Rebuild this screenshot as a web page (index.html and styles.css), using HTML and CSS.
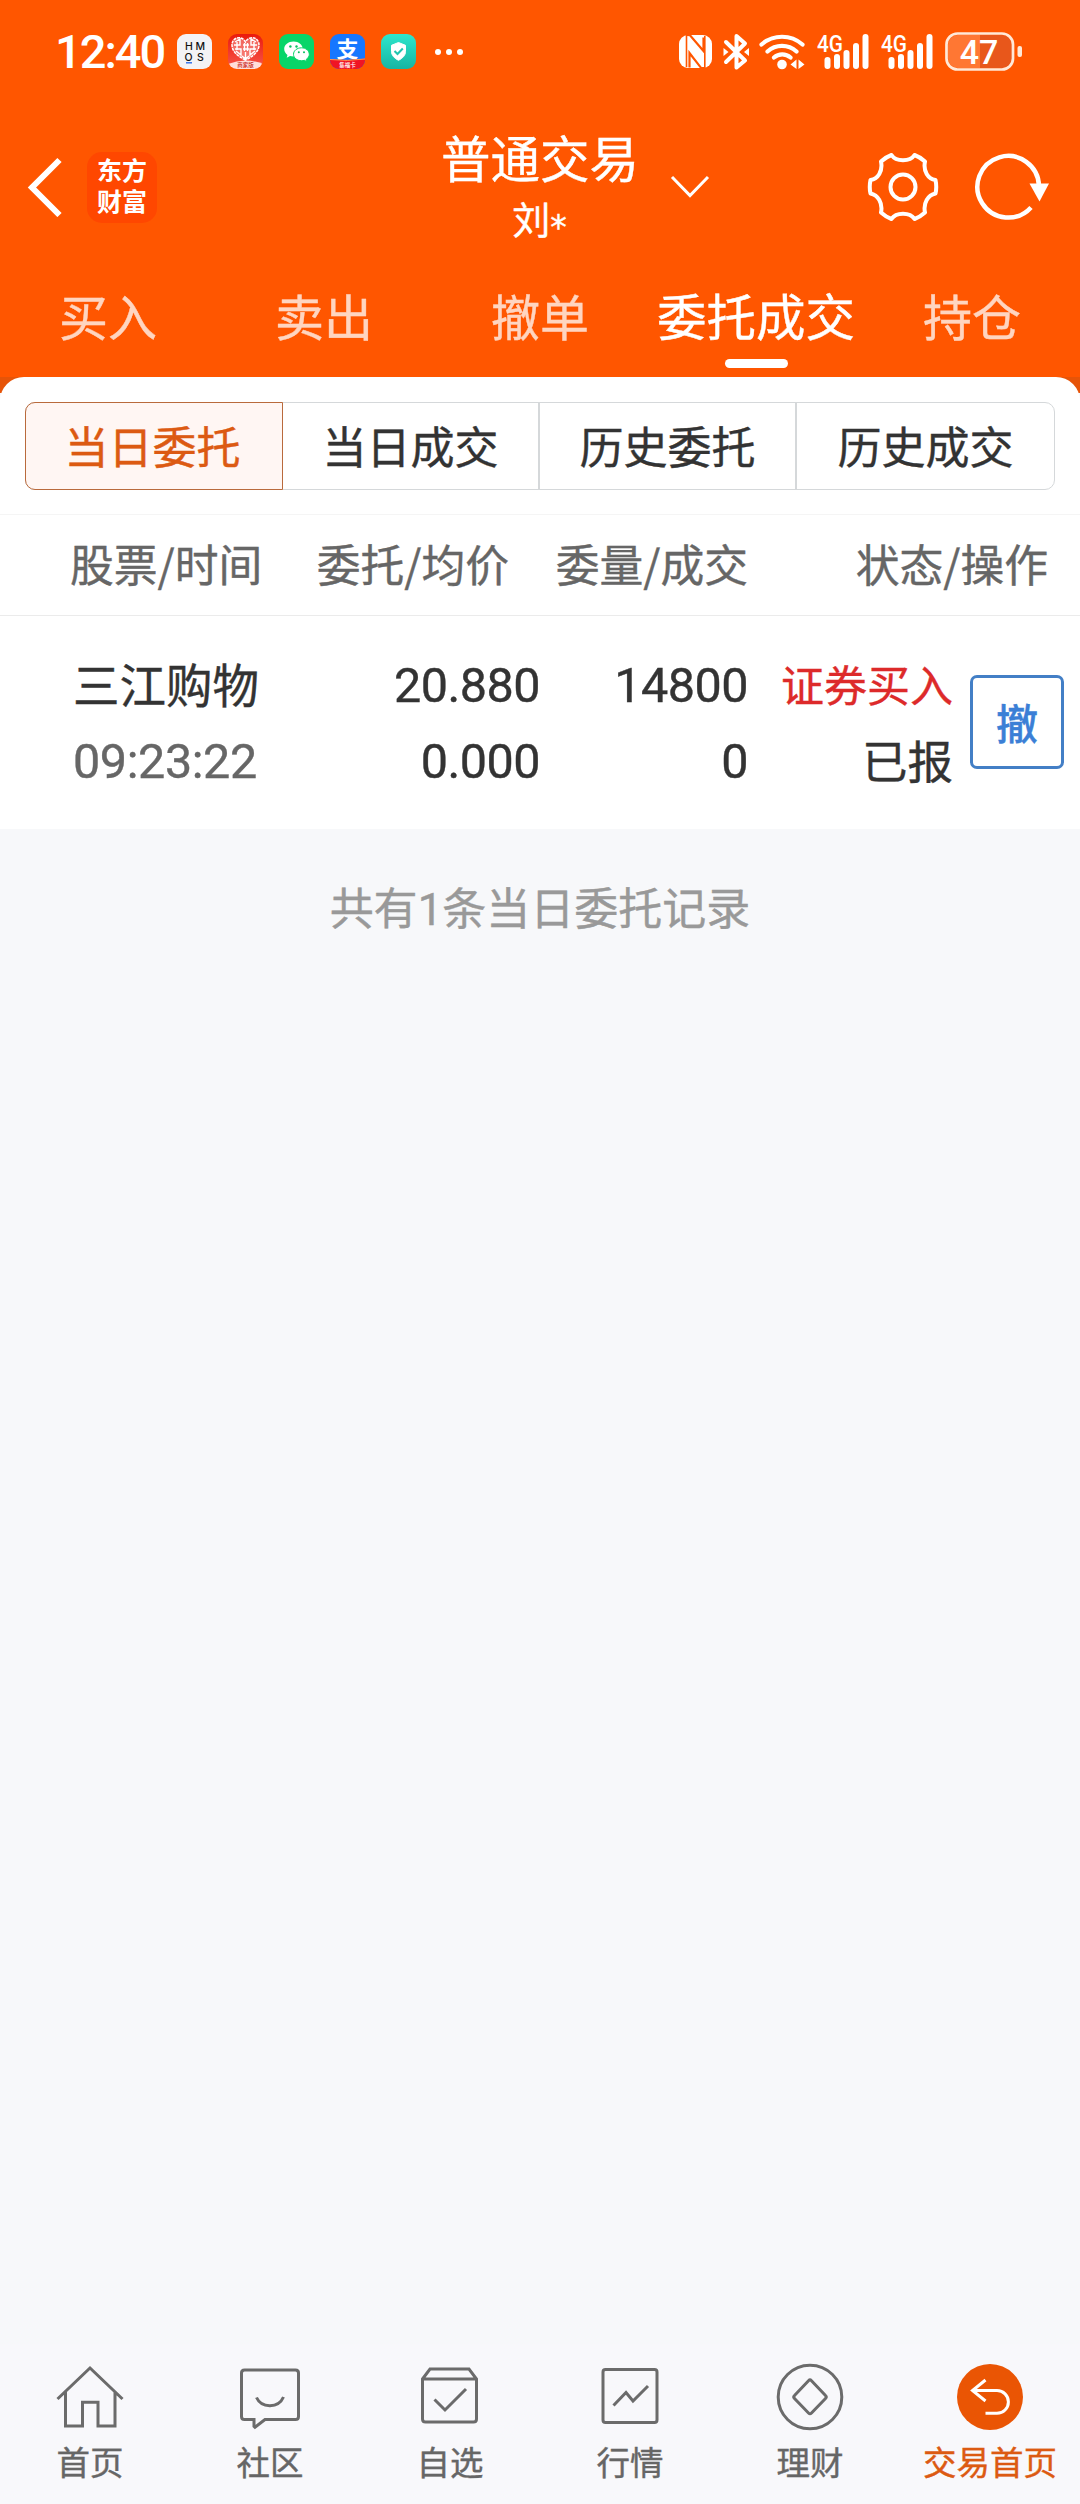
FILE: index.html
```
<!DOCTYPE html>
<html lang="zh-CN">
<head>
<meta charset="utf-8">
<title>普通交易</title>
<link rel="stylesheet" href="styles.css">
</head>
<body>
<header class="top">
  <div class="status">
    <span class="clock">12:40</span>
    <div class="apps">
      <svg width="35" height="35" viewBox="0 0 35 35"><rect width="35" height="35" rx="9" fill="#f3f3f5"/><g class="hmos"><text x="8" y="15.5">H</text><text x="18.5" y="15.5">M</text><text x="7.5" y="27">O</text><text x="20" y="27">S</text></g><path d="M9 28.8h6" stroke="#2a6be8" stroke-width="1.4"/></svg>
      <svg width="35" height="35" viewBox="0 0 35 35"><defs><linearGradient id="red" x2="0" y2="1"><stop offset="0" stop-color="#ea1a0c"/><stop offset="1" stop-color="#f8574c"/></linearGradient><clipPath id="app"><rect width="35" height="35" rx="9"/></clipPath></defs><g clip-path="url(#app)"><rect width="35" height="35" fill="url(#red)"/><path d="M17.500 26C9 22 4 17 4 11c0-8 10-10 13.500-3C21 1 31 3 31 11c0 6-5 11-13.500 15z" fill="#fff" fill-opacity=".3" stroke="#fff" stroke-width="1.500" stroke-dasharray="3 .8"/><path d="M7 8l5-3v6H6m1 4h6v6l-5-4M28 8l-5-3v6h6m-1 4h-6v6l5-4M9 8v8m17-8v8M15 11h6m-6 4h6m-4.500-6v8m3-8v8M17.500 18v9M14 22l3.500 3 3.500-3" fill="none" stroke="#fff" stroke-width="1.400"/><path d="M0 30q17-7 35 0v5H0z" fill="#ffdfdb"/><text x="17.500" y="33.300" class="tiny redtext">商家版</text></g></svg>
      <svg width="35" height="35" viewBox="0 0 35 35"><rect width="35" height="35" rx="9" fill="#07d568"/><path d="M14.500 7.500c-5.200 0-9.300 3.300-9.300 7.600 0 2.400 1.300 4.500 3.300 5.800l-.8 2.900 3.300-1.700c1.100.3 2.300.5 3.500.5 5.200 0 9.300-3.300 9.300-7.500s-4.100-7.600-9.300-7.600z" fill="#fff"/><path d="M22.500 13.800c-4.500 0-8 2.900-8 6.500s3.500 6.400 8 6.400c1 0 1.900-.1 2.800-.4l2.700 1.400-.7-2.400c1.900-1.200 3-3 3-5 0-3.600-3.400-6.500-7.800-6.500z" fill="#fff" stroke="#07d568"/><g fill="#07c160"><circle cx="11.400" cy="12.500" r="1.200"/><circle cx="17.500" cy="12.500" r="1.200"/><circle cx="19.800" cy="18.300" r="1"/><circle cx="25" cy="18.300" r="1"/></g></svg>
      <svg width="35" height="35" viewBox="0 0 35 35"><g clip-path="url(#app)"><rect width="35" height="35" fill="#1677ff"/><text x="17.500" y="22.500" class="zhi">支</text><path d="M0 25q17.500 2 35-.5V35H0z" fill="#f01424"/><path d="M0 25.500q17.500 2 35-.5" fill="none" stroke="#ff9b50"/><text x="17.500" y="33" class="tiny">集福卡</text></g></svg>
      <svg width="35" height="35" viewBox="0 0 35 35"><defs><linearGradient id="teal" x2="0" y2="1"><stop stop-color="#2ee6cc"/><stop offset="1" stop-color="#16b5a2"/></linearGradient></defs><rect width="35" height="35" rx="9" fill="url(#teal)"/><path d="M17.500 8.500l7 2.800v6c0 4.300-3 7-7 9-4-2-7-4.700-7-9v-6z" fill="#fff" stroke="#fff" stroke-linejoin="round"/><path d="M13.500 17l3 3 5.300-5.500" fill="none" stroke="#20c5b0" stroke-width="2"/></svg>
    </div>
    <svg class="more" width="30" height="8" viewBox="0 0 30 8" fill="#fff"><circle cx="4" cy="4" r="3"/><circle cx="15" cy="4" r="3"/><circle cx="26" cy="4" r="3"/></svg>
    <svg class="system" width="345" height="48" viewBox="678 28 345 48" fill="#fff">
      <rect x="679" y="35" width="33" height="33" rx="9"/>
      <path d="M687 35l3 .2L703.500 51V37.500M704 68l-3-.2L689.500 53v14.500" fill="none" stroke="#ff5600" stroke-width="2.200"/><path d="M686.500 35v32M704.800 36v32" stroke="#ff5600" stroke-width="1.600"/>
      <path d="M726 42l19 18.500-8.500 7V36l8.500 7.500L726 62" fill="none" stroke="#fff" stroke-width="4" stroke-linejoin="round" stroke-linecap="round"/><path d="M723.500 48l5 4-5 4zM749 48l-5 4 5 4z"/>
      <g fill="none" stroke="#fff" stroke-width="4.200" stroke-linecap="round"><path d="M761.500 44.500a31 31 0 0 1 41 0M767.500 51.500a21.500 21.500 0 0 1 29 0M774 57.500a12.500 12.500 0 0 1 16.500 0"/></g><circle cx="782" cy="64.500" r="4.800"/><path d="M790.500 64.500l6-5v9.500zM804.500 64.500l-6-5v9.500z"/>
      <text x="817" y="51.500" class="net" textLength="26" lengthAdjust="spacingAndGlyphs">4G</text>
      <g id="bars"><rect x="824.500" y="57" width="6" height="12" rx="3"/><rect x="834" y="54" width="6" height="15" rx="3"/><rect x="843.500" y="50" width="6" height="19" rx="3"/><rect x="853" y="43" width="6" height="26" rx="3"/><rect x="862.500" y="34" width="6" height="35" rx="3"/></g>
      <text x="881" y="51.500" class="net" textLength="26" lengthAdjust="spacingAndGlyphs">4G</text>
      <use href="#bars" x="64"/>
      <path d="M980 35h-22a10 10 0 0 0-10 10v13a10 10 0 0 0 10 10h22z" fill-opacity=".2"/><path d="M980 35h22a10 10 0 0 1 10 10v13a10 10 0 0 1-10 10h-22z" fill="#e8571b"/>
      <rect x="946.500" y="33.500" width="66.500" height="36" rx="11" fill="none" stroke="#ffe9d8" stroke-width="2.700"/><rect x="1017.500" y="46" width="4.500" height="11" rx="2" fill="#ffe9d8"/>
      <text x="979" y="64" class="charge">47</text>
    </svg>
  </div>
  <div class="bar">
    <div class="left">
      <svg width="35" height="60" viewBox="0 0 35 60"><path d="M32.500 3L5 30.500 32.500 58" fill="none" stroke="#fff" stroke-width="6"/></svg>
      <div class="logo"><span>东方</span><span>财富</span></div>
    </div>
    <div class="title"><h1>普通交易</h1><p>刘<span class="star">*</span></p></div>
    <div class="right">
      <svg class="down" width="40" height="24" viewBox="0 0 40 24"><path d="M2 2l18 18.500L38 2" fill="none" stroke="#fff" stroke-width="3"/></svg>
      <svg class="gear" width="72" height="72" viewBox="-36 -36 72 72" fill="none" stroke="#fff" stroke-width="4" stroke-linejoin="round"><circle r="12.500"/><path d="M-11.500-32C-7-25 7-25 11.500-32Q17-30 22-25.500C20-16 25-8 32.500-7Q34 0 32.500 6.500C25 8 20 16 22 25.500Q17 30 11.500 32C7 25-7 25-11.500 32Q-17 30-22 25.500C-20 16-25 8-32.500 6.500Q-34 0-32.500-7C-25-8-20-16-22-25.500Q-17-30-11.500-32z"/></svg>
      <svg width="76" height="70" viewBox="-35 -35 76 70"><path d="M31-1A30.800 30.800 0 1 0 23 20.500" fill="none" stroke="#fff" stroke-width="4.500"/><path d="M21.500-3.500h19.500L31.500 14.500z" fill="#fff"/></svg>
    </div>
  </div>
  <nav class="tabs"><a>买入</a><a>卖出</a><a>撤单</a><a class="on">委托成交</a><a>持仓</a></nav>
</header>
<main>
  <section class="sheet">
    <div class="segments"><button class="on">当日委托</button><button>当日成交</button><button>历史委托</button><button>历史成交</button></div>
    <div class="thead"><span>股票/时间</span><span>委托/均价</span><span>委量/成交</span><span>状态/操作</span></div>
    <div class="order">
      <div class="cell stock"><span>三江购物</span><span class="num time">09:23:22</span></div>
      <div class="cell"><span class="num">20.880</span><span class="num">0.000</span></div>
      <div class="cell"><span class="num">14800</span><span class="num">0</span></div>
      <div class="cell state"><span class="buy">证券买入</span><span>已报</span></div>
      <button class="cancel">撤</button>
    </div>
  </section>
  <p class="summary">共有<span class="one">1</span>条当日委托记录</p>
</main>
<footer class="dock">
  <a><svg viewBox="0 0 72 72"><path d="M3.500 39L36 8l32.500 31M11.500 32v34h17V42.300H44V66h17V32"/></svg>首页</a>
  <a><svg viewBox="0 0 72 72"><path d="M10.500 10h51q3 0 3 3v43.500q0 3-3 3H31L21 67.300l-1-1v-6.800h-9.500q-3 0-3-3V13q0-3 3-3zM22.500 37.500c5 11 22 11 27-.5"/></svg>社区</a>
  <a><svg viewBox="0 0 72 72"><path d="M8.500 19L16 9h39l7.500 10v40q0 3-3 3h-48q-3 0-3-3zM8.500 19h54M20.500 39.500L31 50l21-21"/></svg>自选</a>
  <a><svg viewBox="0 0 72 72"><rect x="9" y="9.500" width="54" height="53" rx="2.500"/><path d="M19.500 45.500L32 32.500l7 8.500 15-15"/></svg>行情</a>
  <a><svg viewBox="0 0 72 72"><circle cx="36" cy="37" r="31.800"/><path d="M34.500 20.700q1.500-1.500 3 0L51.500 35.500q1.500 1.500 0 3L37.500 53q-1.500 1.500-3 0L20.500 38.500q-1.500-1.500 0-3z"/></svg>理财</a>
  <a class="on"><svg viewBox="0 0 72 72"><circle cx="36" cy="37" r="33" fill="#ea5504" stroke="none"/><path d="M31.500 20L18.500 30.500l13 10.500M18.500 30.500H43a11.400 11.400 0 0 1 0 22.800H31.500" stroke="#fff"/></svg>交易首页</a>
</footer>
</body>
</html>
```
FILE: styles.css
```
* { box-sizing: border-box; }
body {
  margin: 0;
  width: 1080px;
  height: 2504px;
  display: flex;
  flex-direction: column;
  background: #f7f8fa;
  color: #333;
  font-family: "Noto Sans CJK SC", sans-serif;
}
h1, p { margin: 0; font-weight: 400; }
button { padding: 0; font: inherit; background: none; border: 0; }
svg { display: block; flex: none; }
.title, .tabs, .segments, .thead, .order, .summary, .dock { -webkit-text-stroke: .4px currentColor; }

.top { height: 393px; background: linear-gradient(#ff5600 377px, #e65408 377px); color: #fff; }
.status { height: 110px; padding: 0 57px 7px 55px; display: flex; align-items: center; }
.clock { width: 122px; font: 500 47px/50px Roboto, sans-serif; letter-spacing: -2px; }
.apps { display: flex; gap: 16px; }
.more { margin-left: 18px; }
.system { margin-left: auto; }
.hmos { font: 500 10.500px Inter, sans-serif; fill: #111; }
.tiny { font: 500 5.500px "Noto Sans CJK SC", sans-serif; text-anchor: middle; fill: #fff; }
.redtext { fill: #c8281e; }
.zhi { font: 700 22px "Noto Sans CJK SC", sans-serif; text-anchor: middle; fill: #fff; }
.net { font: 500 24px Roboto, sans-serif; }
.charge { font: 500 34px Roboto, sans-serif; text-anchor: middle; }

.bar { height: 157px; display: grid; grid-template-columns: 400px 280px 400px; }
.left { display: flex; gap: 26px; padding: 42px 0 0 27px; }
.left svg { margin-top: 5px; }
.logo {
  width: 70px; height: 71px; margin-left: -1px; padding-bottom: 5px; border-radius: 15px; background: #ff4700;
  display: flex; flex-direction: column; align-items: center; justify-content: center;
  font-size: 25px; font-weight: 700; line-height: 31px;
}
.title { text-align: center; }
.title h1 { margin-top: 18px; font-size: 49.500px; line-height: 58px; }
.title p { margin-left: -1px; font-size: 38px; line-height: 64px; }
.star { font-family: "DejaVu Sans", sans-serif; font-size: 33px; position: relative; top: 5px; }
.right { display: flex; align-items: flex-start; justify-content: flex-end; padding: 42px 31px 0 0; }
.down { margin: 23px 157px 0 0; }
.gear { margin: -1px 34px 0 0; }

.tabs { height: 110px; display: grid; grid-template-columns: repeat(5, 216px); text-align: center; }
.tabs a { font-size: 49px; line-height: 96px; color: #ffd5c0; display: flex; flex-direction: column; align-items: center; white-space: nowrap; }
.tabs .on { font-size: 49.500px; color: #fff; }
.tabs .on::after { content: ""; width: 63px; height: 9px; margin-top: -4px; border-radius: 5px; background: #fff; }

main { flex: 1; }
.sheet { position: relative; height: 452px; margin-top: -16px; padding-top: 25px; background: #fff; border-radius: 24px 24px 0 0; }
.segments { height: 88px; margin: 0 25px; display: grid; grid-template-columns: repeat(4, 1fr); border: 1px solid #d5d8da; border-radius: 10px; }
.segments button { padding-bottom: 2px; font-size: 44px; line-height: 84px; color: #333; border-right: 2px solid #d5d8da; white-space: nowrap; }
.segments button:last-child { border: 0; }
.segments .on { margin: -1px 0 -1px -1px; padding-right: 3px; background: #fff6f3; color: #dc5a12; border: 1px solid #b96a3c; border-radius: 10px 0 0 10px; }
.thead {
  height: 102px; margin-top: 24px; padding: 0 32px 0 70px;
  display: grid; grid-template-columns: 190px 249px 239px 300px;
  border-top: 1px solid #f5f5f5; border-bottom: 1px solid #ebebeb;
  font-size: 43.800px; line-height: 97px; color: #666; text-align: right; white-space: nowrap;
}
.order {
  height: 213px; padding: 29px 16px 0 73px;
  display: grid; grid-template-columns: 186px 281px 208px 205px 94px; align-items: start;
}
.cell { display: flex; flex-direction: column; text-align: right; font-size: 46.500px; line-height: 76px; white-space: nowrap; }
.stock { text-align: left; }
.num { font-family: Roboto, sans-serif; font-size: 48.500px; letter-spacing: -.5px; position: relative; top: 3px; }
.time { letter-spacing: -.4px; color: #666; }
.state { font-size: 45.500px; }
.buy { font-size: 43px; }
.buy { color: #dd2a2a; }
.cancel { width: 94px; height: 94px; margin: 30px 0 0 17px; border: 3px solid #437fc6; border-radius: 7px; color: #3b7fd6; font-size: 42px; font-weight: 500; line-height: 82px; }
.summary { padding-top: 45px; text-align: center; color: #999; font-size: 44px; line-height: 64px; }
.one { font-family: Roboto, sans-serif; }

.dock { height: 160px; padding-top: 16px; display: grid; grid-template-columns: repeat(6, 180px); background: #f8f8fb; }
.dock a { display: flex; flex-direction: column; align-items: center; font-size: 33.500px; line-height: 57px; color: #666; white-space: nowrap; }
.dock svg { width: 72px; height: 72px; fill: none; stroke: #6b6b6b; stroke-width: 3; }
.dock .on { color: #dc5a12; }
```
